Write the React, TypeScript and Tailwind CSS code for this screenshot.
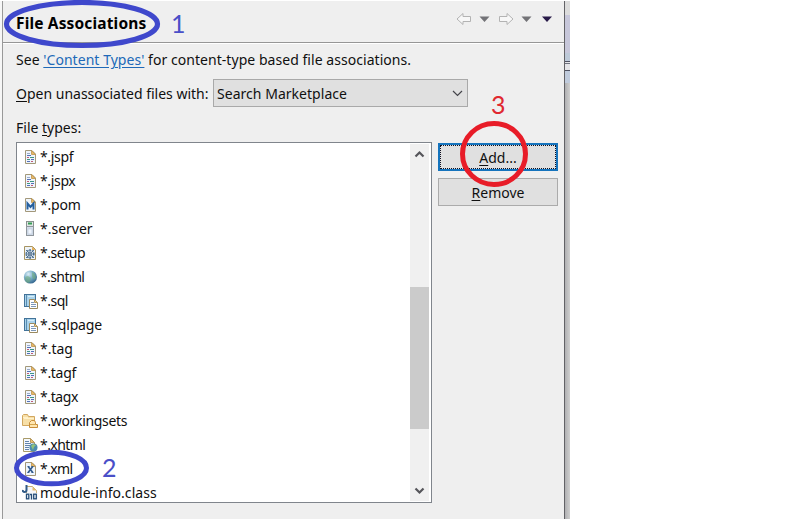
import React from 'react';

type Kind = 'page' | 'pom' | 'server' | 'setup' | 'globe' | 'sql' | 'folder' | 'xhtml' | 'xml' | 'class';

const files: { name: string; kind: Kind; track: string }[] = [
  { name: '*.jspf', kind: 'page', track: 'tracking-[-0.35px]' },
  { name: '*.jspx', kind: 'page', track: 'tracking-[-0.35px]' },
  { name: '*.pom', kind: 'pom', track: 'tracking-[-0.2px]' },
  { name: '*.server', kind: 'server', track: 'tracking-[0px]' },
  { name: '*.setup', kind: 'setup', track: 'tracking-[-0.45px]' },
  { name: '*.shtml', kind: 'globe', track: 'tracking-[-0.6px]' },
  { name: '*.sql', kind: 'sql', track: 'tracking-[-0.5px]' },
  { name: '*.sqlpage', kind: 'sql', track: 'tracking-[-0.15px]' },
  { name: '*.tag', kind: 'page', track: 'tracking-[0px]' },
  { name: '*.tagf', kind: 'page', track: 'tracking-[-0.3px]' },
  { name: '*.tagx', kind: 'page', track: 'tracking-[-0.4px]' },
  { name: '*.workingsets', kind: 'folder', track: 'tracking-[-0.33px]' },
  { name: '*.xhtml', kind: 'xhtml', track: 'tracking-[-0.55px]' },
  { name: '*.xml', kind: 'xml', track: 'tracking-[-0.6px]' },
  { name: 'module-info.class', kind: 'class', track: 'tracking-[0.06px]' },
];

function Sheet() {
  return (
    <>
      <path d="M3.500 1.500h6.500l3.500 3.500v9.500h-10z" fill="#eff5fc" stroke="#a3987a" />
      <path d="M9.500 1.500v4h4z" fill="#e8b765" stroke="#bd944e" strokeWidth=".8" />
    </>
  );
}

function FileIcon({ kind }: { kind: Kind }) {
  return (
    <svg className="h-4 w-4 shrink-0" viewBox="0 0 16 16" fill="none">
      {kind === 'page' && (
        <>
          <Sheet />
          <path d="M5 4.500h3" stroke="#9aaac8" />
          <path d="M5 6.500h4M9 10.500h3" stroke="#5470b8" />
          <path d="M5 8.500h2M9 12.500h2" stroke="#c05a78" />
          <path d="M8 8.500h4M5 10.500h3" stroke="#3f9484" />
          <path d="M5 12.500h3" stroke="#5470b8" />
        </>
      )}
      {kind === 'pom' && (
        <>
          <Sheet />
          <path d="M5.500 12.500v-6l3 3.500 3-3.500v6" stroke="#245f9e" strokeWidth="2" />
        </>
      )}
      {kind === 'server' && (
        <>
          <rect x="4.500" y=".5" width="7" height="5" fill="#dfe6e4" stroke="#89918f" />
          <path d="M6 2.500h4" stroke="#369b55" strokeWidth="2" />
          <rect x="4.500" y="5.500" width="7" height="9" fill="#d4deea" stroke="#8f969c" />
          <rect x="6" y="8" width="4" height="5" fill="#f0f5fc" stroke="#b6c4d6" strokeWidth=".6" />
        </>
      )}
      {kind === 'setup' && (
        <>
          <path d="M2.500 1.500h8l3 3v10h-11z" fill="#eef3f8" stroke="#a69462" />
          <path d="M10 1.500v3.500h3.500z" fill="#e2ad57" />
          <circle cx="8" cy="9" r="3.800" stroke="#466b8c" strokeWidth="1.500" strokeDasharray="1.600 .8" />
          <path d="M4 5l8 8M12 5l-8 8M8 4v10M3.500 9h9" stroke="#466b8c" strokeWidth=".9" />
          <circle cx="8" cy="9" r="1.200" fill="#fff" stroke="#35577a" />
        </>
      )}
      {kind === 'globe' && (
        <>
          <defs>
            <radialGradient id="globe" cx=".35" cy=".28" r=".75">
              <stop offset="0" stopColor="#dceef7" />
              <stop offset=".5" stopColor="#79aec9" />
              <stop offset="1" stopColor="#35678f" />
            </radialGradient>
          </defs>
          <circle cx="8.400" cy="8" r="6.600" fill="url(#globe)" />
          <path d="M3 10q0-3 3-3l3 2-1 4-2 1q-3-1-3-4M10 3l3 2 1 4-2 2-2-3z" fill="#72ad78" opacity=".55" />
        </>
      )}
      {kind === 'sql' && (
        <>
          <rect x="2.500" y="1.500" width="11" height="12" fill="#a9d2ea" stroke="#427399" />
          <path d="M4.500 2v11" stroke="#5b8db1" />
          <path d="M6 3.500h6" stroke="#d5edf8" />
          <path d="M7.500 6.500h5l3 3v6h-8z" fill="#fff" stroke="#9a8a60" />
          <path d="M12.500 6.500v3h3z" fill="#edcd91" stroke="#b69a5e" />
          <path d="M9 9.500h3M9 11.500h5M9 13.500h5" stroke="#7c98ba" />
        </>
      )}
      {kind === 'folder' && (
        <>
          <path d="M.5 12.500v-10l1-1h4l1 2h6v9z" fill="#f7dfa7" stroke="#d2a75f" />
          <path d="M1 4.500h5M2 5.500h10" stroke="#fff1ca" />
          <path d="M7.500 14.500v-5l2-2h3l1 2v2h2v3z" fill="#ffe6b0" stroke="#c88d39" />
          <path d="M8 11.500h6" stroke="#d5a650" />
        </>
      )}
      {kind === 'xhtml' && (
        <>
          <path d="M1.500 1.500h7l4 4v9h-11z" fill="#f4f8fd" stroke="#a99a68" />
          <path d="M8.500 1.500v4h4z" fill="#e8bd72" stroke="#b89a5c" />
          <path d="M3 4.500h4M3 6.500h6M3 8.500h5M3 10.500h4M3 12.500h4" stroke="#6384ab" />
          <circle cx="11.500" cy="10.500" r="4" fill="#4b8caf" />
          <path d="M9 9l2-2 3 1-2 2-1 3z" fill="#91c17b" />
        </>
      )}
      {kind === 'xml' && (
        <>
          <Sheet />
          <path d="M6.200 5.500l4.500 6M10.700 5.500l-4.500 6" stroke="#315b8c" strokeWidth="1.600" />
          <path d="M5.500 5.500h2M9.500 5.500h2M5.300 11.500h2M9.500 11.500h2" stroke="#315b8c" />
        </>
      )}
      {kind === 'class' && (
        <>
          <path d="M4.500 1.500h6l4 4v9h-10z" fill="#f5f7fa" stroke="#c7ae77" />
          <path d="M10.500 1.500v4h4z" fill="#e6bd70" />
          <path d="M4.500 0v5q0 2-2 2t-1.500-2" stroke="#315b87" strokeWidth="2" />
          <rect x="3.500" y="8" width="12.500" height="7" fill="#f5f9fc" />
          <rect x="4.500" y="9.200" width="2.300" height="4.600" stroke="#254d78" strokeWidth="1.300" />
          <path d="M8 9.500h1.500v5" stroke="#254d78" strokeWidth="1.300" />
          <rect x="11.700" y="9.200" width="2.600" height="4.600" stroke="#254d78" strokeWidth="1.300" />
        </>
      )}
    </svg>
  );
}

function ScrollChevron({ down = false }: { down?: boolean }) {
  return (
    <svg className="h-[18px] w-[19px] shrink-0" viewBox="0 0 19 18" fill="none">
      <path d={down ? 'M5.500 5.500l4 4 4-4' : 'M5.500 12.500l4-4 4 4'} stroke="#55555a" strokeWidth="2.200" />
    </svg>
  );
}

export default function App() {
  return (
    <div className="relative flex h-[519px] w-[807px] overflow-hidden bg-white pt-px font-['Noto_Sans','Open_Sans',sans-serif] text-[14px] text-[#101010]">
      <div className="w-[2px] bg-[#f7f7f7]" />
      <main className="flex h-[518px] w-[563px] flex-col border-x border-l-[#999] border-r-[#626266] bg-[#efefef]">
        <header className="flex h-[42px] shrink-0 items-start justify-between border-b border-[#969696] pl-[13px] pt-[11px] shadow-[0_1px_0_#fff]">
          <h1 className="whitespace-nowrap text-[15.5px] font-bold leading-[22px] tracking-[0.15px] text-black">File Associations</h1>
          <svg className="mr-[7px] h-[16px] w-[105px]" viewBox="0 0 105 16" fill="none">
            <path d="M5 7l6-5.500v3h7.500v5h-7.500v3z" fill="#f7f7f7" stroke="#b3b3b3" />
            <path d="M27.500 4.500h10l-5 5.500zM69.500 4.500h10l-5 5.500z" fill="#737377" />
            <path d="M61 7l-6-5.500v3h-7.500v5h7.500v3z" fill="#f7f7f7" stroke="#b3b3b3" />
            <path d="M90 4.500h10l-5 5.500z" fill="#291b49" />
          </svg>
        </header>
        <p className="ml-[13px] mt-[7px] h-[20px] shrink-0 whitespace-nowrap leading-[20px] tracking-[0.045px]">
          See <a className="text-[#2069b8] underline underline-offset-2">'Content Types'</a> for content-type based file associations.
        </p>
        <div className="ml-[13px] mt-[9px] flex h-[28px] shrink-0 items-center">
          <label className="w-[197px] whitespace-nowrap"><span className="underline underline-offset-2">O</span>pen unassociated files with:</label>
          <div className="flex h-[28px] w-[255px] items-center justify-between border border-[#a9a9a9] bg-[#e0e0e0] pl-[3px] pr-[4px]">
            <span className="tracking-[0.03px]">Search Marketplace</span>
            <svg className="h-[10px] w-[11px]" viewBox="0 0 11 10" fill="none"><path d="M1 3l4.500 4.500L10 3" stroke="#44444a" strokeWidth="1.200" /></svg>
          </div>
        </div>
        <div className="ml-[13px] mt-[11px] h-[20px] shrink-0 leading-[20px]">File <span className="underline underline-offset-2">t</span>ypes:</div>
        <div className="ml-[13px] mt-[4px] flex items-start gap-[6px]">
          <section className="flex h-[361px] w-[416px] overflow-hidden border border-[#80858c] bg-white">
            <ul className="min-w-0 flex-1 pl-[5px] pt-[2px]">
              {files.map((f) => (
                <li key={f.name} className="flex h-[24px] items-center gap-[2px]">
                  <FileIcon kind={f.kind} />
                  <span className={`whitespace-nowrap leading-[20px] ${f.track}`}>{f.name}</span>
                </li>
              ))}
            </ul>
            <div className="mr-[2px] mt-px flex h-[357px] w-[19px] flex-col bg-[#f0f0f0]">
              <ScrollChevron />
              <div className="mt-[125px] h-[142px] shrink-0 bg-[#cbcbcb]" />
              <div className="mt-[54px]"><ScrollChevron down /></div>
            </div>
          </section>
          <div className="flex flex-col gap-[7px] pt-px">
            <button className="flex h-[28px] w-[120px] border-2 border-[#1674bd] bg-[#e0e0e0]">
              <span className="h-[24px] w-[116px] border border-dotted border-[#101020] leading-[24px]"><u className="underline-offset-2">A</u>dd...</span>
            </button>
            <button className="h-[28px] w-[120px] border border-[#ababab] bg-[#e0e0e0] pt-px leading-[26px]"><u className="underline-offset-2">R</u>emove</button>
          </div>
        </div>
      </main>
      <aside className="flex w-[5px] flex-col bg-gradient-to-r from-[#b0b0b2] to-[#cfcfcf]">
        <div className="h-[14px] bg-[#dcdcdc]" />
        <div className="h-[38px] bg-[#c7c7da]" />
        <div className="h-[8px] bg-[#bdc9d8]" />
        <div className="flex h-[10px] flex-col justify-between border-b border-t border-[#505363] bg-[#e5e5e8] pt-px">
          <div className="h-px bg-[#70737f]" />
        </div>
        <div className="h-[12px] bg-[#c0cbdc]" />
      </aside>
      <svg className="pointer-events-none absolute left-0 top-0 h-[519px] w-[570px]" viewBox="0 0 570 519" fill="none">
        <ellipse cx="82" cy="24" rx="75.500" ry="21.500" stroke="#3f48cc" strokeWidth="5.200" />
        <ellipse cx="51.500" cy="468" rx="35" ry="15.800" stroke="#3f48cc" strokeWidth="5" />
        <ellipse cx="494" cy="154" rx="31.500" ry="30.500" stroke="#e81c28" strokeWidth="5" />
      </svg>
      <span className="absolute left-[171px] top-[6px] font-['Lato',sans-serif] text-[25px] leading-[34px] text-[#4a4fc8]">1</span>
      <span className="absolute left-[102px] top-[450px] font-['Lato',sans-serif] text-[25px] leading-[34px] text-[#4a4fc8]">2</span>
      <span className="absolute left-[491px] top-[87px] font-['Lato',sans-serif] text-[25px] leading-[34px] text-[#e02830]">3</span>
    </div>
  );
}
